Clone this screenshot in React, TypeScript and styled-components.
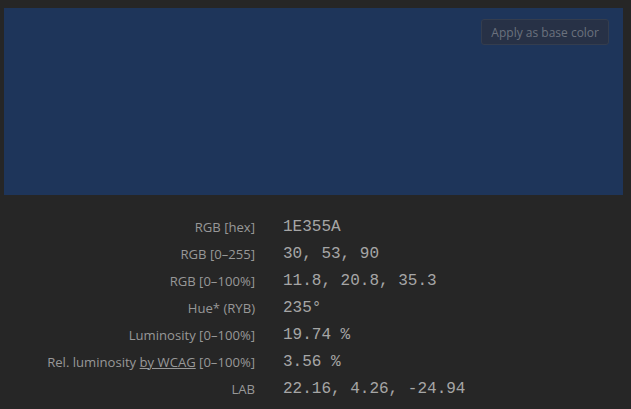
import React from "react";
import styled, { createGlobalStyle } from "styled-components";

const Global = createGlobalStyle`
  html, body { margin: 0; padding: 0; background: #262626; }
  body { font-family: "Open Sans", "Noto Sans", sans-serif; }
`;

const Page = styled.div`
  width: 631px;
  height: 409px;
  background: #262626;
  padding: 8px 8px 0 4px;
  box-sizing: border-box;
  overflow: hidden;
`;

const Swatch = styled.div<{ $color: string }>`
  background: ${(p) => p.$color};
  height: 187px;
  display: flex;
  justify-content: flex-end;
  align-items: flex-start;
  padding: 11px 14px 0 0;
  box-sizing: border-box;
`;

const ApplyButton = styled.button`
  height: 26px;
  padding: 0 9px;
  background: #273146;
  border: 1px solid #343d4e;
  border-radius: 3px;
  color: #6b717e;
  font-family: "Open Sans", "Noto Sans", sans-serif;
  font-size: 12px;
  cursor: pointer;
`;

const Table = styled.div`
  display: grid;
  grid-template-columns: 251px auto;
  column-gap: 28px;
  grid-auto-rows: 27px;
  padding-top: 18px;
  align-items: center;
`;

const Label = styled.div`
  text-align: right;
  color: #989898;
  font-family: "Open Sans", "Noto Sans", sans-serif;
  font-size: 13.1px;
  white-space: nowrap;
`;

const Link = styled.span`
  text-decoration: underline;
`;

const Value = styled.div`
  color: #a6a6a6;
  font-family: "Liberation Mono", "DejaVu Sans Mono", monospace;
  font-size: 16px;
  white-space: nowrap;
`;

const rows: { label: React.ReactNode; value: string }[] = [
  { label: "RGB [hex]", value: "1E355A" },
  { label: "RGB [0–255]", value: "30, 53, 90" },
  { label: "RGB [0–100%]", value: "11.8, 20.8, 35.3" },
  { label: "Hue* (RYB)", value: "235°" },
  { label: "Luminosity [0–100%]", value: "19.74 %" },
  {
    label: (
      <>
        Rel. luminosity <Link>by WCAG</Link> [0–100%]
      </>
    ),
    value: "3.56 %",
  },
  { label: "LAB", value: "22.16, 4.26, -24.94" },
];

export default function App() {
  return (
    <Page>
      <Global />
      <Swatch $color="#1E355A">
        <ApplyButton>Apply as base color</ApplyButton>
      </Swatch>
      <Table>
        {rows.map((r, i) => (
          <React.Fragment key={i}>
            <Label>{r.label}</Label>
            <Value>{r.value}</Value>
          </React.Fragment>
        ))}
      </Table>
    </Page>
  );
}
